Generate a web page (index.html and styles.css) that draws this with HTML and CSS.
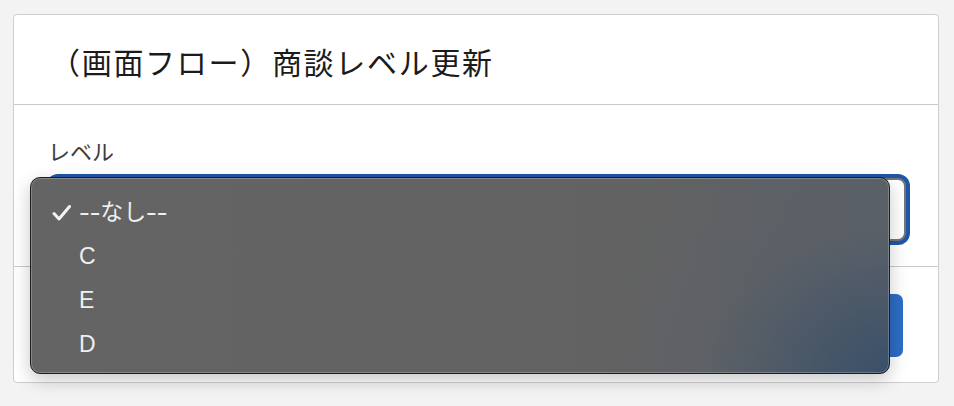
FILE: index.html
```html
<!DOCTYPE html>
<html lang="ja">
<head>
<meta charset="utf-8">
<title>商談レベル更新</title>
<link rel="stylesheet" href="styles.css">
</head>
<body>
  <div class="card">
    <div class="card-header">
      <h1 class="title">（画面フロー）商談レベル更新</h1>
    </div>
    <div class="card-body">
      <div class="label">レベル</div>
      <div class="select"></div>
    </div>
    <div class="card-footer">
      <button class="btn">完了</button>
    </div>
  </div>

  <ul class="menu">
    <li class="item checked">
      <svg class="check" viewBox="0 0 20 16" width="20" height="16"><polyline points="2,8.5 7,14 17.5,1.5" fill="none" stroke="#f2f2f2" stroke-width="3" stroke-linecap="round" stroke-linejoin="round"/></svg>
      <span class="dash dash-lead">--</span>なし<span class="dash">--</span>
    </li>
    <li class="item">C</li>
    <li class="item">E</li>
    <li class="item">D</li>
  </ul>
</body>
</html>
```
FILE: styles.css
```css
* { box-sizing: border-box; }

body {
  margin: 0;
  background: #f3f3f3;
  font-family: "Noto Sans CJK JP", "Noto Sans", sans-serif;
  position: relative;
  width: 954px;
  height: 406px;
  overflow: hidden;
}

.card {
  margin: 14px 0 0 13px;
  width: 926px;
  background: #ffffff;
  border: 1px solid #cfcfcf;
  border-radius: 4px;
}

.card-header {
  height: 90px;
  border-bottom: 1px solid #c9c9c9;
  display: flex;
  align-items: center;
  padding: 2px 0 0 36px;
}

.title {
  margin: 0;
  font-weight: 400;
  font-size: 30px;
  letter-spacing: 1.7px;
  color: #1b1b1b;
  line-height: 1;
}

.card-body {
  padding: 30px 32px 25px 36px;
  border-bottom: 1px solid #c9c9c9;
}

.label {
  font-size: 22px;
  line-height: 30px;
  color: #3d3d3d;
  margin-left: -2px;
}

.select {
  margin-top: 13px;
  height: 63px;
  border: 2px solid #767676;
  border-radius: 8px;
  background: #ffffff;
  box-shadow: 0 0 0 4px #1f56a6;
}

.card-footer {
  height: 115px;
  padding: 27px 35px 25px 0;
  display: flex;
  justify-content: flex-end;
}

.btn {
  width: 130px;
  height: 63px;
  border: none;
  border-radius: 7px;
  background: #2d6cc5;
  color: #ffffff;
  font-family: "Noto Sans CJK JP", sans-serif;
  font-size: 20px;
}

.menu {
  position: absolute;
  left: 30px;
  top: 177px;
  width: 860px;
  height: 197px;
  margin: 0;
  padding: 12px 0 0 0;
  list-style: none;
  border: 1px solid #1d1d1d;
  border-radius: 10px;
  background:
    radial-gradient(ellipse 300px 240px at 100% 100%, rgba(58, 80, 104, 1), rgba(90, 96, 104, 0.4) 60%, rgba(99, 99, 99, 0) 100%),
    linear-gradient(90deg, #646464 0%, #626262 70%, #5b6068 100%);
  box-shadow: inset 0 0 0 1px rgba(255, 255, 255, 0.22), 0 6px 18px rgba(0, 0, 0, 0.22);
}

.item {
  position: relative;
  height: 44px;
  line-height: 44px;
  padding-left: 48px;
  font-family: "Liberation Sans", "Noto Sans CJK JP", sans-serif;
  font-size: 23px;
  color: #efefef;
}

.dash {
  display: inline-block;
  transform: scaleX(1.4);
  transform-origin: 0 50%;
}

.dash-lead {
  margin-right: 6px;
}

.check {
  position: absolute;
  left: 21px;
  top: 15px;
}
```
